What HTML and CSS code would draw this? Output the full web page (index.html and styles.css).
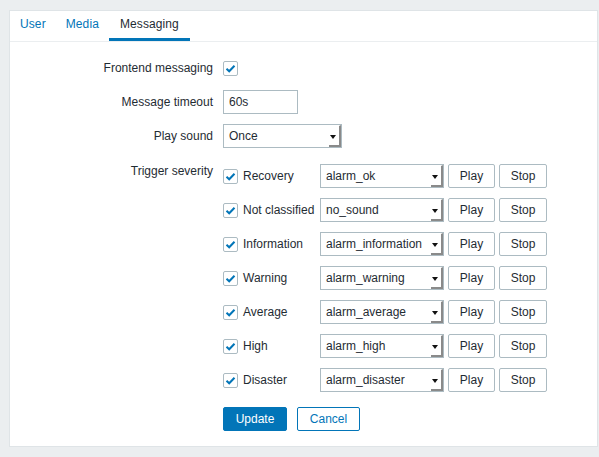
FILE: index.html
```html
<!DOCTYPE html>
<html>
<head>
<meta charset="utf-8">
<link rel="stylesheet" href="styles.css">
</head>
<body>
<div class="panel">
  <nav class="tabs">
    <a class="tab">User</a>
    <a class="tab">Media</a>
    <a class="tab active">Messaging</a>
  </nav>
  <form class="form">
    <div class="row row-check">
      <div class="label">Frontend messaging</div>
      <div class="control"><span class="cb"><svg viewBox="0 0 15 15" width="15" height="15"><path d="M3.5 7.8 L6.2 10.3 L11.5 4.8" fill="none" stroke="#0275b8" stroke-width="2"/></svg></span></div>
    </div>
    <div class="row">
      <div class="label">Message timeout</div>
      <div class="control"><span class="input">60s</span></div>
    </div>
    <div class="row">
      <div class="label">Play sound</div>
      <div class="control"><span class="select sel-play">Once<span class="arrow"></span></span></div>
    </div>
    <div class="row row-sev">
      <div class="label label-top">Trigger severity</div>
      <div class="control sev-list">
        <div class="sev"><span class="cb"><svg viewBox="0 0 15 15" width="15" height="15"><path d="M3.5 7.8 L6.2 10.3 L11.5 4.8" fill="none" stroke="#0275b8" stroke-width="2"/></svg></span><span class="sev-name">Recovery</span><span class="select sel-sev">alarm_ok<span class="arrow"></span></span><span class="btn">Play</span><span class="btn">Stop</span></div>
        <div class="sev"><span class="cb"><svg viewBox="0 0 15 15" width="15" height="15"><path d="M3.5 7.8 L6.2 10.3 L11.5 4.8" fill="none" stroke="#0275b8" stroke-width="2"/></svg></span><span class="sev-name">Not classified</span><span class="select sel-sev">no_sound<span class="arrow"></span></span><span class="btn">Play</span><span class="btn">Stop</span></div>
        <div class="sev"><span class="cb"><svg viewBox="0 0 15 15" width="15" height="15"><path d="M3.5 7.8 L6.2 10.3 L11.5 4.8" fill="none" stroke="#0275b8" stroke-width="2"/></svg></span><span class="sev-name">Information</span><span class="select sel-sev">alarm_information<span class="arrow"></span></span><span class="btn">Play</span><span class="btn">Stop</span></div>
        <div class="sev"><span class="cb"><svg viewBox="0 0 15 15" width="15" height="15"><path d="M3.5 7.8 L6.2 10.3 L11.5 4.8" fill="none" stroke="#0275b8" stroke-width="2"/></svg></span><span class="sev-name">Warning</span><span class="select sel-sev">alarm_warning<span class="arrow"></span></span><span class="btn">Play</span><span class="btn">Stop</span></div>
        <div class="sev"><span class="cb"><svg viewBox="0 0 15 15" width="15" height="15"><path d="M3.5 7.8 L6.2 10.3 L11.5 4.8" fill="none" stroke="#0275b8" stroke-width="2"/></svg></span><span class="sev-name">Average</span><span class="select sel-sev">alarm_average<span class="arrow"></span></span><span class="btn">Play</span><span class="btn">Stop</span></div>
        <div class="sev"><span class="cb"><svg viewBox="0 0 15 15" width="15" height="15"><path d="M3.5 7.8 L6.2 10.3 L11.5 4.8" fill="none" stroke="#0275b8" stroke-width="2"/></svg></span><span class="sev-name">High</span><span class="select sel-sev">alarm_high<span class="arrow"></span></span><span class="btn">Play</span><span class="btn">Stop</span></div>
        <div class="sev"><span class="cb"><svg viewBox="0 0 15 15" width="15" height="15"><path d="M3.5 7.8 L6.2 10.3 L11.5 4.8" fill="none" stroke="#0275b8" stroke-width="2"/></svg></span><span class="sev-name">Disaster</span><span class="select sel-sev">alarm_disaster<span class="arrow"></span></span><span class="btn">Play</span><span class="btn">Stop</span></div>
      </div>
    </div>
    <div class="row row-actions">
      <div class="label"></div>
      <div class="control actions"><span class="btn-primary">Update</span><span class="btn-alt">Cancel</span></div>
    </div>
  </form>
</div>
</body>
</html>
```
FILE: styles.css
```css
html, body {
  margin: 0;
  padding: 0;
  background: #ebeef0;
  font-family: "Liberation Sans", Arial, sans-serif;
  font-size: 12px;
  color: #1f2c33;
}
.panel {
  margin: 10px 1px 0 9px;
  height: 435px;
  background: #fff;
  border: 1px solid #dfe4e7;
}
.tabs {
  display: flex;
  border-bottom: 1px solid #ebeef0;
  padding-left: 0;
}
.tab {
  display: block;
  padding: 0 10px;
  line-height: 27px;
  border-bottom: 3px solid transparent;
  color: #0275b8;
  letter-spacing: 0.1px;
}
.tab.active {
  color: #1f2c33;
  border-bottom-color: #0275b8;
  padding: 0 11px;
}
.form {
  padding-top: 14px;
}
.row {
  display: flex;
  align-items: center;
  margin-bottom: 10px;
}
.row-sev {
  align-items: flex-start;
  margin-top: 16px;
  margin-bottom: 15px;
}
.label {
  width: 213px;
  flex: none;
  box-sizing: border-box;
  padding-right: 10px;
  text-align: right;
}
.label-top {
  line-height: 14px;
  margin-top: 0;
}
.control {
  display: flex;
  align-items: center;
  min-height: 24px;
}
.cb {
  display: block;
  width: 15px;
  height: 15px;
  box-sizing: border-box;
  border: 1px solid #acbbc2;
  border-radius: 2px;
  background: #fff;
  position: relative;
}
.cb svg {
  position: absolute;
  left: -1px;
  top: -1px;
}
.input {
  display: flex;
  align-items: center;
  box-sizing: border-box;
  width: 75px;
  height: 24px;
  padding: 0 5px;
  border: 1px solid #acbbc2;
  background: #fff;
}
.select {
  display: flex;
  align-items: center;
  box-sizing: border-box;
  height: 24px;
  padding: 0 5px;
  border: 1px solid #acbbc2;
  background: #fff;
  position: relative;
}
.sel-play { width: 119px; }
.sel-sev { width: 124px; }
.arrow {
  position: absolute;
  right: 0;
  top: 0;
  bottom: 0;
  width: 12px;
  border-right: 2px solid #8a8a8a;
  border-bottom: 2px solid #8a8a8a;
  box-sizing: border-box;
  border-top: 1px solid transparent;
}
.arrow::before {
  content: "";
  position: absolute;
  left: 1px;
  top: 9px;
  border-left: 3px solid transparent;
  border-right: 3px solid transparent;
  border-top: 4px solid #111;
}
.sev-list {
  flex-direction: column;
  align-items: flex-start;
  gap: 10px;
}
.sev {
  display: flex;
  align-items: center;
  height: 24px;
}
.sev-name {
  width: 77px;
  margin-left: 5px;
  flex: none;
}
.btn {
  display: flex;
  align-items: center;
  justify-content: center;
  box-sizing: border-box;
  height: 24px;
  border: 1px solid #acbbc2;
  border-radius: 2px;
  background: #fff;
  margin-left: 4px;
  width: 47px;
}
.btn + .btn {
  width: 48px;
}
.actions {
  gap: 10px;
}
.btn-primary, .btn-alt {
  display: flex;
  align-items: center;
  justify-content: center;
  box-sizing: border-box;
  height: 24px;
  border-radius: 2px;
  border: 1px solid #0275b8;
}
.btn-primary {
  width: 64px;
  background: #0275b8;
  color: #fff;
}
.btn-alt {
  width: 63px;
  background: #fff;
  color: #0275b8;
}
```
